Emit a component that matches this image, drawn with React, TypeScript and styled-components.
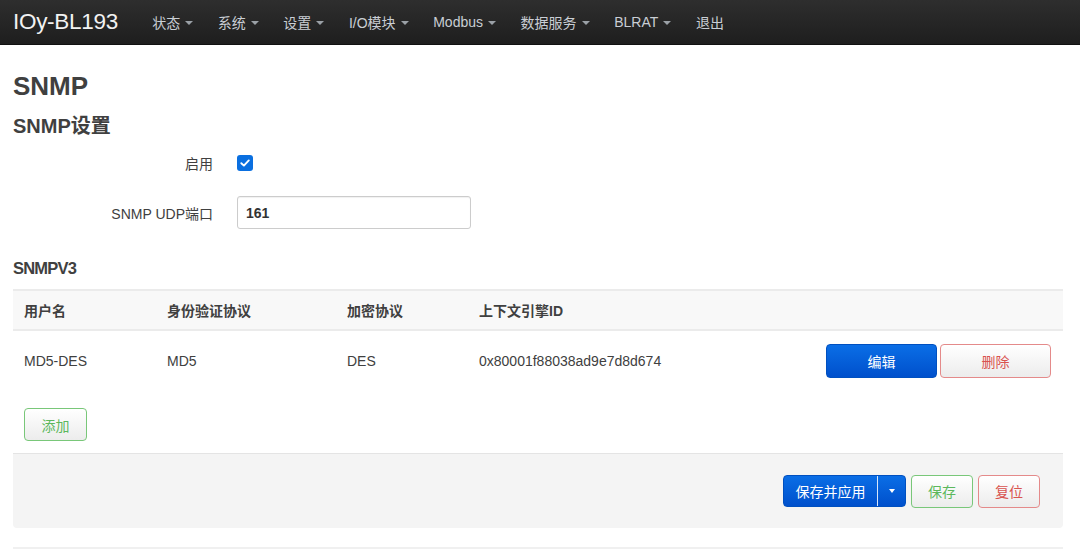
import React from "react";
import styled, { createGlobalStyle } from "styled-components";

const Global = createGlobalStyle`
  html, body { margin: 0; padding: 0; background: #fff; }
  body { font-family: "Liberation Sans", "Noto Sans CJK SC", sans-serif; color: #404040; font-size: 14px; }
  * { box-sizing: border-box; }
`;

const NavBar = styled.header`
  height: 45px;
  background: linear-gradient(#2e2e2e, #1e1e1e);
  border-bottom: 1px solid #111;
  display: flex;
  align-items: center;
  padding: 0 13px;
`;

const Brand = styled.div`
  color: #f2f2f2;
  font-size: 22.5px;
  margin-right: 22px;
  letter-spacing: -0.3px;
`;

const NavItem = styled.div`
  color: #c9ced4;
  font-size: 14px;
  padding: 0 12.3px;
  display: flex;
  align-items: center;
  gap: 5px;
`;

const Caret = styled.span`
  width: 0;
  height: 0;
  border-left: 4px solid transparent;
  border-right: 4px solid transparent;
  border-top: 4px solid #9aa0a6;
  margin-top: 1px;
`;

const Main = styled.main`
  padding: 0 17px 0 13px;
`;

const H1 = styled.h1`
  margin: 0;
  padding-top: 26px;
  font-size: 26px;
  line-height: 30px;
  font-weight: bold;
  color: #404040;
`;

const H2 = styled.h2`
  margin: 0;
  margin-top: 13px;
  font-size: 20px;
  line-height: 24px;
  font-weight: bold;
  color: #404040;
`;

const H3 = styled.h3`
  margin: 0;
  margin-top: 28px;
  font-size: 16.5px;
  line-height: 22px;
  font-weight: bold;
  letter-spacing: -0.8px;
  color: #404040;
`;

const FormRow = styled.div<{ $top: number }>`
  display: grid;
  grid-template-columns: 200px 1fr;
  column-gap: 24px;
  align-items: center;
  margin-top: ${(p) => p.$top}px;
`;

const Label = styled.label`
  text-align: right;
  font-size: 14px;
  color: #404040;
`;

const Check = styled.span`
  width: 16px;
  height: 16px;
  border-radius: 3px;
  background: #0a6fe0;
  display: inline-flex;
  align-items: center;
  justify-content: center;
`;

const Input = styled.input`
  width: 234px;
  height: 33px;
  border: 1px solid #ccc;
  border-radius: 3px;
  padding: 0 8px;
  font-family: inherit;
  font-size: 14px;
  font-weight: bold;
  color: #333;
  box-shadow: inset 0 1px 1px rgba(0, 0, 0, 0.06);
`;

const Table = styled.div`
  margin-top: 10px;
  width: 1050px;
`;

const TRow = styled.div<{ $head?: boolean }>`
  display: grid;
  grid-template-columns: 143px 180px 132px 1fr auto;
  align-items: center;
  height: ${(p) => (p.$head ? 42 : 59)}px;
  background: ${(p) => (p.$head ? "#f8f8f8" : "#fff")};
  border-top: ${(p) => (p.$head ? "2px solid #ebebeb" : "none")};
  border-bottom: ${(p) => (p.$head ? "2px solid #ebebeb" : "none")};
  font-weight: ${(p) => (p.$head ? "bold" : "normal")};
  padding-right: 12px;
`;

const Cell = styled.div`
  padding-left: 11px;
  font-size: 14px;
  color: #404040;
  white-space: nowrap;
`;

const Actions = styled.div`
  display: flex;
  gap: 3px;
`;

const Btn = styled.button<{ $kind: "primary" | "danger" | "success"; $w: number; $h: number }>`
  width: ${(p) => p.$w}px;
  height: ${(p) => p.$h}px;
  border-radius: 4px;
  font-family: inherit;
  font-size: 14px;
  cursor: pointer;
  padding: 0;
  border: 1px solid
    ${(p) => (p.$kind === "primary" ? "#0050c0" : p.$kind === "danger" ? "#e48a8a" : "#79c779")};
  background: ${(p) =>
    p.$kind === "primary"
      ? "linear-gradient(#0a6ee6, #0050cc)"
      : "linear-gradient(#ffffff, #ececec)"};
  color: ${(p) => (p.$kind === "primary" ? "#fff" : p.$kind === "danger" ? "#d9534f" : "#5cb85c")};
`;

const AddWrap = styled.div`
  padding: 18px 0 12px 11px;
`;

const Footer = styled.div`
  width: 1050px;
  height: 75px;
  background: #f4f4f4;
  border-top: 1px solid #e4e4e4;
  border-radius: 0 0 4px 4px;
  display: flex;
  align-items: center;
  justify-content: flex-end;
  padding-right: 23px;
  gap: 5px;
`;

const Split = styled.div`
  display: flex;
  width: 123px;
  height: 32px;
  border-radius: 4px;
  overflow: hidden;
  background: linear-gradient(#0a6ee6, #0050cc);
  border: 1px solid #0050c0;
  color: #fff;
`;

const SplitMain = styled.div`
  flex: 1;
  display: flex;
  align-items: center;
  justify-content: center;
  font-size: 14px;
  border-right: 1px solid #d8e6fa;
`;

const SplitCaret = styled.div`
  width: 27px;
  display: flex;
  align-items: center;
  justify-content: center;
`;

const WhiteCaret = styled.span`
  width: 0;
  height: 0;
  border-left: 3px solid transparent;
  border-right: 3px solid transparent;
  border-top: 4px solid #fff;
`;

const BottomLine = styled.div`
  width: 1050px;
  margin-top: 19px;
  border-top: 2px solid #f0f0f0;
`;

const navItems = ["状态", "系统", "设置", "I/O模块", "Modbus", "数据服务", "BLRAT"];

export default function App() {
  return (
    <>
      <Global />
      <NavBar>
        <Brand>IOy-BL193</Brand>
        {navItems.map((n) => (
          <NavItem key={n}>
            {n}
            <Caret />
          </NavItem>
        ))}
        <NavItem>退出</NavItem>
      </NavBar>
      <Main>
        <H1>SNMP</H1>
        <H2>SNMP设置</H2>
        <FormRow $top={15}>
          <Label>启用</Label>
          <div>
            <Check>
              <svg width="12" height="12" viewBox="0 0 12 12">
                <path d="M2.3 6.2 L4.9 8.6 L9.8 3.4" fill="none" stroke="#fff" strokeWidth="1.9" strokeLinecap="round" strokeLinejoin="round" />
              </svg>
            </Check>
          </div>
        </FormRow>
        <FormRow $top={23}>
          <Label>SNMP UDP端口</Label>
          <div>
            <Input defaultValue="161" />
          </div>
        </FormRow>
        <H3>SNMPV3</H3>
        <Table>
          <TRow $head>
            <Cell>用户名</Cell>
            <Cell>身份验证协议</Cell>
            <Cell>加密协议</Cell>
            <Cell>上下文引擎ID</Cell>
            <div />
          </TRow>
          <TRow>
            <Cell>MD5-DES</Cell>
            <Cell>MD5</Cell>
            <Cell>DES</Cell>
            <Cell>0x80001f88038ad9e7d8d674</Cell>
            <Actions>
              <Btn $kind="primary" $w={111} $h={34}>编辑</Btn>
              <Btn $kind="danger" $w={111} $h={34}>删除</Btn>
            </Actions>
          </TRow>
        </Table>
        <AddWrap>
          <Btn $kind="success" $w={63} $h={33}>添加</Btn>
        </AddWrap>
        <Footer>
          <Split>
            <SplitMain>保存并应用</SplitMain>
            <SplitCaret>
              <WhiteCaret />
            </SplitCaret>
          </Split>
          <Btn $kind="success" $w={62} $h={33}>保存</Btn>
          <Btn $kind="danger" $w={62} $h={33}>复位</Btn>
        </Footer>
        <BottomLine />
      </Main>
    </>
  );
}
